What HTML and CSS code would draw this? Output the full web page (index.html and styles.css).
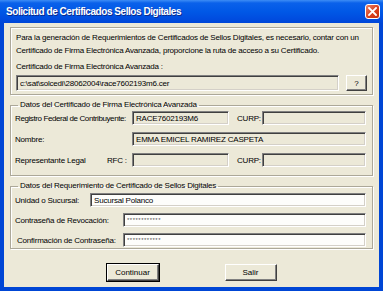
FILE: index.html
```html
<!DOCTYPE html>
<html lang="es">
<head>
    <meta charset="UTF-8">
    <title>Solicitud de Certificados Sellos Digitales</title>
    <link rel="stylesheet" href="styles.css">
</head>
<body>
    <div class="window">
        <div class="titlebar">
            <span class="title">Solicitud de Certificados Sellos Digitales</span>
            <span class="close">
                <svg width="9" height="9" viewBox="0 0 9 9"><path d="M1 1L8 8M8 1L1 8" stroke="#fff" stroke-width="1.8" stroke-linecap="square"/></svg>
            </span>
        </div>

        <div class="client">
            <div class="intro">
                <p class="intro-text">Para la generación de Requerimientos de Certificados de Sellos Digitales, es necesario, contar con un<br>Certificado de Firma Electrónica Avanzada, proporcione la ruta de acceso a su Certificado.</p>
                <div class="field-title">Certificado de Firma Electrónica Avanzada :</div>
                <div class="path-row">
                    <input class="field field-off path" type="text" value="c:\sat\solcedi\28062004\race7602193m6.cer" readonly>
                    <button class="btn btn-small">?</button>
                </div>
            </div>

            <fieldset class="group group-cert">
                <legend>Datos del Certificado de Firma Electrónica Avanzada</legend>
                <div class="row">
                    <span class="lbl lbl-cert lbl-tight">Registro Federal de Contribuyente:</span>
                    <input class="field field-off short" type="text" value="RACE7602193M6" readonly>
                    <span class="lbl lbl-curp">CURP:</span>
                    <input class="field field-off curp" type="text" readonly>
                </div>
                <div class="row">
                    <span class="lbl lbl-cert">Nombre:</span>
                    <input class="field field-off wide" type="text" value="EMMA EMICEL RAMIREZ CASPETA" readonly>
                </div>
                <div class="row">
                    <span class="lbl lbl-rep">Representante Legal</span>
                    <span class="lbl lbl-rfc">RFC :</span>
                    <input class="field field-off short" type="text" readonly>
                    <span class="lbl lbl-curp">CURP:</span>
                    <input class="field field-off curp" type="text" readonly>
                </div>
            </fieldset>

            <fieldset class="group group-req">
                <legend>Datos del Requerimiento de Certificado de Sellos Digitales</legend>
                <div class="row">
                    <span class="lbl lbl-unidad">Unidad o Sucursal:</span>
                    <input class="field wide" type="text" value="Sucursal Polanco">
                </div>
                <div class="row">
                    <span class="lbl lbl-pass">Contraseña de Revocación:</span>
                    <input class="field wide secret" type="text" value="************">
                </div>
                <div class="row">
                    <span class="lbl lbl-pass lbl-indent">Confirmación de Contraseña:</span>
                    <input class="field wide secret" type="text" value="************">
                </div>
            </fieldset>

            <div class="buttons">
                <button class="btn btn-default">Continuar</button>
                <button class="btn">Salir</button>
            </div>
        </div>
    </div>
</body>
</html>
```

FILE: styles.css
```css
* {
    margin: 0;
    padding: 0;
    box-sizing: border-box;
}

body {
    font-family: 'Liberation Sans', Arial, sans-serif;
    font-size: 8px;
    letter-spacing: -0.2px;
    color: #000;
    background: #fff;
}

.window {
    width: 383px;
    height: 291px;
    display: flex;
    flex-direction: column;
    background: #0046d5;
}

.titlebar {
    height: 23px;
    display: flex;
    align-items: center;
    justify-content: space-between;
    padding: 0 3px 0 6px;
    background: linear-gradient(#3d8df5 0, #0a61ea 3px, #0058e6 50%, #004de0 80%, #0047d8 100%);
}

.title {
    color: #fff;
    font-weight: bold;
    font-size: 10px;
    letter-spacing: -0.45px;
    text-shadow: 1px 1px #0b2b8c;
}

.close {
    width: 15px;
    height: 15px;
    border: 1px solid #fff;
    border-radius: 3px;
    background: linear-gradient(135deg, #e9856a, #d9401d 55%, #c5310f);
    display: flex;
    align-items: center;
    justify-content: center;
}

.client {
    flex: 1;
    margin: 0 4px 4px;
    background: #ece9d8;
    padding: 4px 6px 0 6px;
    display: flex;
    flex-direction: column;
}

.intro {
    height: 68px;
    border: 1px solid #aca899;
    box-shadow: inset 1px 1px #fff, 1px 1px #fff;
    padding: 3px 5px 0 5px;
}

.intro-text {
    line-height: 13px;
    white-space: nowrap;
}

.field-title {
    margin-top: 5px;
    line-height: 10px;
}

.path-row {
    display: flex;
    align-items: center;
    gap: 7px;
    margin-top: 3px;
}

.field {
    height: 14px;
    border: 1px solid;
    border-color: #808080 #fff #fff #808080;
    box-shadow: inset 1px 1px #404040, inset -1px -1px #d4d0c8;
    background: #fdfdfb;
    font-family: inherit;
    font-size: 8px;
    letter-spacing: -0.2px;
    padding: 0 3px;
    color: #000;
    outline: none;
}

.field-off {
    background: #ece9d8;
}

.path {
    width: 323px;
    height: 16px;
}

.btn {
    font-family: inherit;
    font-size: 8px;
    background: #ece9d8;
    border: 1px solid;
    border-color: #fff #404040 #404040 #fff;
    box-shadow: inset -1px -1px #808080;
    width: 52px;
    height: 17px;
    color: #000;
}

.btn-small {
    width: 21px;
    height: 16px;
}

.btn-default {
    outline: 1px solid #000;
    outline-offset: 0;
}

.group {
    border: 1px solid #aca899;
    box-shadow: inset 1px 1px #fff, 1px 1px #fff;
    padding: 0 6px 0 4px;
}

.group legend {
    margin-left: 3px;
    padding: 0 2px;
    line-height: 10px;
}

.group-cert {
    margin-top: 5px;
    height: 76px;
}

.group-req {
    margin-top: 5px;
    height: 68px;
}

.row {
    display: flex;
    align-items: center;
    height: 14px;
}

.group-cert .row + .row {
    margin-top: 7px;
}

.group-cert .row:first-of-type {
    margin-top: 1px;
}

.group-req .row + .row {
    margin-top: 6px;
}

.group-req .row:first-of-type {
    margin-top: 2px;
}

.lbl {
    white-space: nowrap;
}

.lbl-cert {
    width: 117px;
}

.lbl-tight {
    letter-spacing: -0.4px;
}

.lbl-rep {
    width: 92px;
}

.lbl-rfc {
    width: 25px;
}

.lbl-curp {
    width: 33px;
    padding-left: 8px;
}

.short {
    width: 97px;
}

.curp {
    width: 104px;
}

.wide {
    flex: 1;
}

.lbl-unidad {
    width: 75px;
}

.lbl-pass {
    width: 108px;
}

.lbl-indent {
    padding-left: 2px;
}

.secret {
    font-size: 6px;
    letter-spacing: 0.5px;
    color: #555;
}

.buttons {
    display: flex;
    justify-content: center;
    gap: 66px;
    margin-top: 15px;
}
```
